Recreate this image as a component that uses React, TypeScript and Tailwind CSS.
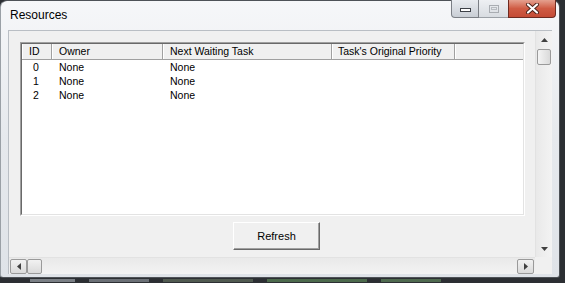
import React from "react";

const rows = [
  { id: "0", owner: "None", task: "None" },
  { id: "1", owner: "None", task: "None" },
  { id: "2", owner: "None", task: "None" },
];

const cols = [
  { label: "ID", w: "w-[30px]", pad: "pl-[6px]" },
  { label: "Owner", w: "w-[111px]", pad: "pl-[6px]" },
  { label: "Next Waiting Task", w: "w-[169px]", pad: "pl-[6px]" },
  { label: "Task's Original Priority", w: "w-[123px]", pad: "pl-[5px]" },
];

function CaptionButtons() {
  return (
    <div className="flex h-[18px] mr-[3px] -mt-px">
      <div className="w-[28px] h-full rounded-bl-[4px] border border-t-0 border-[#7b7f85] bg-gradient-to-b from-[#e9ecf0] to-[#c9ced5] flex items-center justify-center">
        <div className="w-[11px] h-[4px] bg-white border border-[#3d4147] mt-[3px]" />
      </div>
      <div className="w-[29px] h-full border-b border-[#9ba0a6] bg-gradient-to-b from-[#eef0f3] to-[#d8dce1] flex items-center justify-center">
        <div className="w-[10px] h-[8px] border border-[#a9adb2] flex items-center justify-center">
          <div className="w-[6px] h-[3px] border border-[#b8bcc1]" />
        </div>
      </div>
      <div className="w-[48px] h-full rounded-br-[4px] border border-t-0 border-[#6e2a20] bg-gradient-to-b from-[#e4a08f] via-[#cf5b44] to-[#c44b35] flex items-center justify-center">
        <svg width="15" height="11" viewBox="0 0 15 11">
          <path d="M3 1.5 L12 9.5 M12 1.5 L3 9.5" stroke="#4a2018" strokeWidth="4" strokeLinecap="round" />
          <path d="M3 1.5 L12 9.5 M12 1.5 L3 9.5" stroke="#ffffff" strokeWidth="2.2" strokeLinecap="round" />
        </svg>
      </div>
    </div>
  );
}

function ListView() {
  return (
    <div className="w-[505px] h-[174px] border-t border-l border-[#a0a0a0] border-b border-r border-b-white border-r-white">
      <div className="w-full h-full border-t border-l border-[#696969] border-b border-r border-b-[#e3e3e3] border-r-[#e3e3e3] bg-white flex flex-col">
        <div className="flex h-[16px] bg-[#f0f0f0] border-b border-[#a0a0a0] shrink-0 text-[10.5px]">
          {cols.map((c) => (
            <div
              key={c.label}
              className={`${c.w} ${c.pad} h-full border-l border-white border-r border-r-[#a0a0a0] leading-[15px] whitespace-nowrap`}
            >
              {c.label}
            </div>
          ))}
          <div className="flex-1 h-full border-l border-white" />
        </div>
        {rows.map((r) => (
          <div key={r.id} className="flex h-[14px] leading-[14px] whitespace-nowrap text-[10.5px]">
            <div className="w-[30px] pl-[11px]">{r.id}</div>
            <div className="w-[111px] pl-[7px]">{r.owner}</div>
            <div className="w-[169px] pl-[7px]">{r.task}</div>
          </div>
        ))}
      </div>
    </div>
  );
}

function Tri({ dir }: { dir: "up" | "down" | "left" | "right" }) {
  const paths = {
    up: "M0 4 L3.5 0 L7 4 Z",
    down: "M0 0 L7 0 L3.5 4 Z",
    left: "M4 0 L4 7 L0 3.5 Z",
    right: "M0 0 L4 3.5 L0 7 Z",
  };
  const vert = dir === "up" || dir === "down";
  return (
    <svg width={vert ? 7 : 4} height={vert ? 4 : 7} viewBox={vert ? "0 0 7 4" : "0 0 4 7"}>
      <path d={paths[dir]} fill="#404040" />
    </svg>
  );
}

export default function App() {
  return (
    <div
      className="w-[565px] h-[283px] bg-[#2c2f33] overflow-hidden text-[11px] text-black"
      style={{ fontFamily: '"Liberation Sans", Arial, sans-serif' }}
    >
      <div className="w-[560px] h-[278px] rounded-t-[7px] rounded-b-[3px] border border-[#4e5257] border-l-[#9aa0a6] bg-gradient-to-b from-[#f6f7f9] via-[#e6e9ed] to-[#dfe3e8] flex flex-col">
        <div className="h-[29px] flex items-start shrink-0">
          <div className="pl-[9px] pt-[7px] text-[12px] leading-[15px]">Resources</div>
          <div className="ml-auto">
            <CaptionButtons />
          </div>
        </div>
        <div className="ml-[7px] w-[544px] h-[244px] border-t border-l border-[#b9bec4] grid grid-cols-[526px_17px] grid-rows-[226px_17px] bg-[#f0f0f0]">
          <div className="flex flex-col pl-[11px] pt-[11px]">
            <ListView />
            <button className="mt-[6px] ml-[213px] w-[87px] h-[28px] bg-[#f0f0f0] border border-t-white border-l-white border-b-[#696969] border-r-[#696969] shadow-[inset_-1px_-1px_0_#a0a0a0] text-[11px] leading-none">
              Refresh
            </button>
          </div>
          <div className="flex flex-col items-center bg-gradient-to-r from-[#e9e9e9] to-[#f3f3f3] border-l border-[#e2e2e2]">
            <div className="h-[17px] flex items-center">
              <Tri dir="up" />
            </div>
            <div className="w-[14px] h-[16px] mt-[1px] rounded-[2px] border border-[#9a9a9a] bg-gradient-to-r from-[#f4f4f4] to-[#dadada]" />
            <div className="mt-auto h-[17px] flex items-center">
              <Tri dir="down" />
            </div>
          </div>
          <div className="flex items-center px-[1px] bg-gradient-to-b from-[#e9e9e9] to-[#f3f3f3] border-t border-[#e2e2e2]">
            <div className="w-[17px] h-[15px] rounded-[2px] border border-[#9a9a9a] bg-gradient-to-b from-[#f2f2f2] to-[#dadada] flex items-center justify-center">
              <Tri dir="left" />
            </div>
            <div className="w-[15px] h-[15px] rounded-[2px] border border-[#9a9a9a] bg-gradient-to-b from-[#f2f2f2] to-[#dadada]" />
            <div className="ml-auto w-[17px] h-[15px] rounded-[2px] border border-[#9a9a9a] bg-gradient-to-b from-[#f2f2f2] to-[#dadada] flex items-center justify-center">
              <Tri dir="right" />
            </div>
          </div>
          <div className="bg-[#f0f0f0]" />
        </div>
      </div>
      <div className="flex gap-[14px] pl-[30px] -mt-[1px] h-[5px] items-end">
        <div className="w-[45px] h-[3px] bg-[#7a7f85]" />
        <div className="w-[60px] h-[3px] bg-[#6b7076]" />
        <div className="w-[90px] h-[3px] bg-[#505a50]" />
        <div className="w-[100px] h-[3px] bg-[#4c6a4c]" />
        <div className="w-[60px] h-[3px] bg-[#4f6a4f]" />
      </div>
    </div>
  );
}
